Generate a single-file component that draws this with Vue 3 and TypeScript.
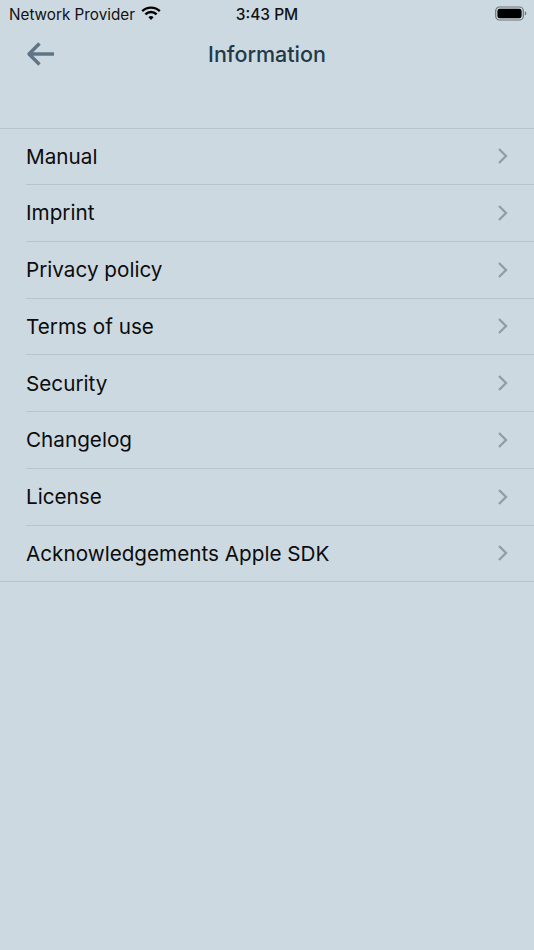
<script setup lang="ts">
const items: string[] = [
  'Manual',
  'Imprint',
  'Privacy policy',
  'Terms of use',
  'Security',
  'Changelog',
  'License',
  'Acknowledgements Apple SDK',
]
</script>

<template>
  <div class="screen">
    <div class="status">
      <div class="status-left">
        <span class="carrier">Network Provider</span>
        <svg class="wifi" width="20" height="15" viewBox="0 0 20 15">
          <path d="M1.2 5.2 A12.5 12.5 0 0 1 18.8 5.2" fill="none" stroke="#000" stroke-width="2.4" />
          <path d="M4.4 8.3 A8 8 0 0 1 15.6 8.3" fill="none" stroke="#000" stroke-width="2.4" />
          <path d="M7.4 11.2 A3.8 3.8 0 0 1 12.6 11.2 L10 14 Z" fill="#000" />
        </svg>
      </div>
      <span class="clock">3:43 PM</span>
      <svg class="battery" width="32" height="15" viewBox="0 0 32 15">
        <rect x="0.7" y="1" width="27.6" height="13" rx="3.8" fill="none" stroke="#6f7579" stroke-width="1.2" />
        <rect x="2.4" y="2.7" width="24.2" height="9.6" rx="2.3" fill="#000" />
        <path d="M29.8 5.6 C31 6 31.3 6.7 31.3 7.5 C31.3 8.3 31 9 29.8 9.4 Z" fill="#6f7579" />
      </svg>
    </div>

    <header class="nav">
      <svg class="back" width="30" height="26" viewBox="0 0 30 26">
        <path d="M28 13 H4 M13.5 2.5 L3 13 L13.5 23.5" fill="none" stroke="#5f7585" stroke-width="3.4" stroke-linejoin="round" />
      </svg>
      <h1 class="title">Information</h1>
    </header>

    <ul class="list">
      <li v-for="item in items" :key="item" class="row">
        <div class="row-inner">
          <span class="label">{{ item }}</span>
          <svg class="chevron" width="12" height="18" viewBox="0 0 12 18">
            <path d="M2 2 L9 9 L2 16" fill="none" stroke="#939da4" stroke-width="2.4" />
          </svg>
        </div>
      </li>
    </ul>
  </div>
</template>

<style>
html,
body {
  margin: 0;
  background: #cdd9e1;
}
</style>

<style scoped>
.screen {
  width: 534px;
  height: 950px;
  background: #cdd9e1;
  font-family: Inter, "Liberation Sans", sans-serif;
  overflow: hidden;
}
.status {
  height: 28px;
  position: relative;
  display: flex;
  align-items: center;
  justify-content: space-between;
  padding: 0 7px 0 9px;
  box-sizing: border-box;
}
.status-left {
  display: flex;
  align-items: center;
  gap: 6px;
}
.carrier {
  font-size: 15.25px;
  color: #111;
}
.wifi {
  margin-top: -1px;
}
.clock {
  position: absolute;
  left: 0;
  right: 0;
  text-align: center;
  font-size: 15.5px;
  font-weight: 500;
  color: #111;
}
.battery {
  margin-top: -1px;
}
.nav {
  height: 52px;
  position: relative;
  display: flex;
  align-items: center;
  justify-content: center;
}
.back {
  position: absolute;
  left: 26px;
  top: 13px;
}
.title {
  margin: 0;
  font-size: 21.5px;
  font-weight: 500;
  color: #22394a;
  line-height: 52px;
}
.list {
  list-style: none;
  margin: 48.3px 0 0;
  padding: 0;
  box-shadow: inset 0 1px #b8c5ce;
}
.row {
  padding-left: 26px;
}
.row:last-child {
  padding-left: 0;
}
.row:last-child .row-inner {
  padding-left: 26px;
}
.row-inner {
  height: 56.75px;
  box-sizing: border-box;
  display: flex;
  align-items: center;
  justify-content: space-between;
  padding-right: 25px;
  border-bottom: 1px solid #b8c5ce;
}
.label {
  font-size: 20.7px;
  color: #0c0c0c;
}
</style>
